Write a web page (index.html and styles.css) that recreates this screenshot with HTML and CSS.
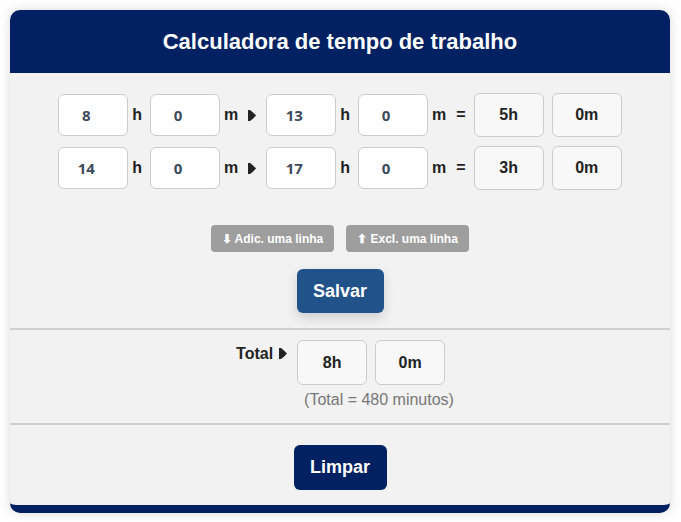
FILE: index.html
```html
<!DOCTYPE html>
<html lang="pt">
<head>
  <meta charset="UTF-8">
  <title>Calculadora de tempo de trabalho</title>
  <link rel="stylesheet" href="styles.css">
</head>
<body>

  <div class="card">
    <!-- Header -->
    <header class="card__header">
      <h1>Calculadora de tempo de trabalho</h1>
    </header>

    <!-- Linhas -->
    <section class="section section--rows">
      <div class="row">
        <input class="inp" type="text" value="8"><span class="lbl">h</span>
        <input class="inp" type="text" value="0"><span class="lbl">m</span>
        <svg class="arrow" width="8" height="11" viewBox="0 0 8 11"><path d="M0 0H2Q5 2 8 5.5Q5 9 2 11H0Z"/></svg>
        <input class="inp" type="text" value="13"><span class="lbl">h</span>
        <input class="inp" type="text" value="0"><span class="lbl">m</span>
        <span class="eq">=</span>
        <div class="res">5h</div>
        <div class="res">0m</div>
      </div>
      <div class="row">
        <input class="inp" type="text" value="14"><span class="lbl">h</span>
        <input class="inp" type="text" value="0"><span class="lbl">m</span>
        <svg class="arrow" width="8" height="11" viewBox="0 0 8 11"><path d="M0 0H2Q5 2 8 5.5Q5 9 2 11H0Z"/></svg>
        <input class="inp" type="text" value="17"><span class="lbl">h</span>
        <input class="inp" type="text" value="0"><span class="lbl">m</span>
        <span class="eq">=</span>
        <div class="res">3h</div>
        <div class="res">0m</div>
      </div>

      <div class="small-btns">
        <button class="btn-small">&#11015; Adic. uma linha</button>
        <button class="btn-small">&#11014; Excl. uma linha</button>
      </div>

      <button class="btn btn--save">Salvar</button>
    </section>

    <!-- Total -->
    <section class="section section--total">
      <div class="total">
        <span class="total__label">Total<svg class="arrow" width="8" height="11" viewBox="0 0 8 11"><path d="M0 0H2Q5 2 8 5.5Q5 9 2 11H0Z"/></svg></span>
        <div class="total__values">
          <div class="total__boxes">
            <div class="res">8h</div>
            <div class="res">0m</div>
          </div>
          <div class="total__min">(Total = 480 minutos)</div>
        </div>
      </div>
    </section>

    <!-- Limpar -->
    <section class="section section--clear">
      <button class="btn btn--clear">Limpar</button>
    </section>
  </div>

</body>
</html>
```

FILE: styles.css
```css
body {
  margin: 0;
  background: #fff;
  font-family: "Liberation Sans", Arial, sans-serif;
  color: #222;
}

.card {
  margin: 10px;
  width: 660px;
  background: #f2f2f2;
  border-radius: 10px;
  overflow: hidden;
  border-bottom: 8px solid #012163;
  box-shadow: 0 0 12px rgba(0, 0, 0, 0.15);
}

.card__header {
  background: #012163;
  height: 63px;
}

.card__header h1 {
  margin: 0;
  font-size: 22px;
  line-height: 63px;
  color: #fff;
  text-align: center;
}

.section {
  display: flex;
  flex-direction: column;
  align-items: center;
}

.section + .section {
  border-top: 2px solid #d0d0d0;
}

.section--rows {
  padding: 20px 0 15px;
}

.row {
  display: flex;
  align-items: center;
  height: 44px;
}

.row + .row {
  margin-top: 9px;
}

.inp {
  box-sizing: border-box;
  width: 70px;
  height: 42px;
  margin: 0 4px;
  padding: 0 14px 0 0;
  border: 1px solid #ccc;
  border-radius: 6px;
  background: #fff;
  font-family: "Open Sans", sans-serif;
  font-weight: 700;
  font-size: 15px;
  color: #3d4a5c;
  text-align: center;
}

.lbl {
  font-weight: bold;
  font-size: 16px;
  margin-right: 4px;
}

.arrow {
  margin: 0 6px;
  fill: #222;
}

.eq {
  font-weight: bold;
  font-size: 16px;
  margin: 0 4px 0 6px;
}

.res {
  box-sizing: border-box;
  width: 70px;
  height: 44px;
  margin: 0 4px;
  border: 1px solid #ccc;
  border-radius: 6px;
  background: #f8f8f8;
  font-weight: bold;
  font-size: 16px;
  line-height: 42px;
  text-align: center;
}

.small-btns {
  display: flex;
  gap: 12px;
  margin-top: 35px;
}

.btn-small {
  width: 123px;
  height: 27px;
  border: none;
  border-radius: 4px;
  background: #9e9e9e;
  color: #fff;
  font-family: "Liberation Sans", Arial, sans-serif;
  font-weight: bold;
  font-size: 12px;
}

.btn {
  height: 44px;
  border: none;
  border-radius: 6px;
  color: #fff;
  font-family: "Liberation Sans", Arial, sans-serif;
  font-weight: bold;
  font-size: 18px;
}

.btn--save {
  margin-top: 17px;
  width: 87px;
  background: #21538a;
  box-shadow: 0 5px 12px rgba(0, 0, 0, 0.15);
}

/* Total */
.section--total {
  padding: 10px 0 14px;
}

.total {
  display: flex;
  align-items: flex-start;
  margin-left: 10px;
}

.total__label {
  font-weight: bold;
  font-size: 16px;
  padding-top: 5px;
  margin-right: 6px;
}

.total__label .arrow {
  margin: 0 0 0 6px;
}

.total__boxes {
  display: flex;
}

.total__boxes .res {
  height: 45px;
  line-height: 43px;
}

.total__min {
  margin: 6px 0 0 11px;
  font-size: 16px;
  color: #777;
}

.section--clear {
  padding: 20px 0 15px;
}

.btn--clear {
  width: 93px;
  height: 45px;
  background: #012163;
}
```
